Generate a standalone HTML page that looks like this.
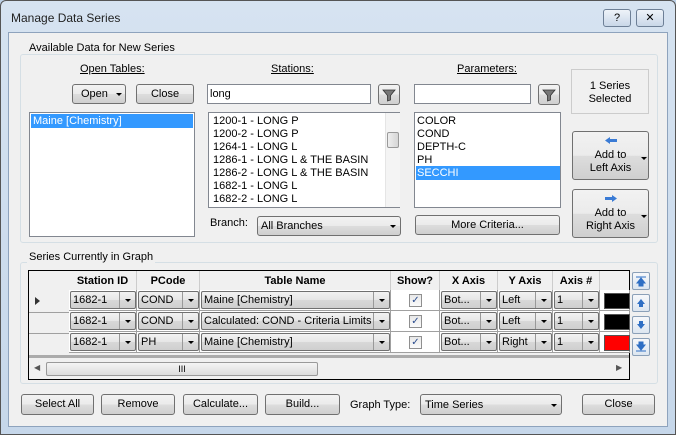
<!DOCTYPE html>
<html><head><meta charset="utf-8"><style>
*{box-sizing:border-box;margin:0;padding:0}
body{width:676px;height:435px;overflow:hidden;background:#bcd0e6;font-family:"Liberation Sans",sans-serif;font-size:11px;color:#000;position:relative}
.a{position:absolute}
.frame{left:0;top:0;width:676px;height:435px;border:1px solid #555;border-radius:6px 6px 0 0;background:linear-gradient(#d6e3f1,#c6d7ea)}
.client{left:8px;top:32px;width:660px;height:395px;background:#f0f0f0;border:1px solid #8ea3bd}
.grp{border:1px solid #d5dfe5;border-radius:3px}
.gl{background:#f0f0f0;padding:0 2px;font-size:11px}
.btn{border:1px solid #707070;border-radius:3px;background:linear-gradient(#f2f2f2 0%,#ebebeb 50%,#dddddd 51%,#cfcfcf 100%);text-align:center;font-size:11px;line-height:18px}
.box{background:#fff;border:1px solid #828790}
.sel{background:#3399ff;color:#fff}
.u{text-decoration:underline}
.it{position:absolute;left:4px;font-size:11px;white-space:nowrap}
.arr{position:absolute;width:0;height:0;border-left:3px solid transparent;border-right:3px solid transparent;border-top:3px solid #000}
.cell{position:absolute;height:21px;border-right:1px solid #a0a0a0;border-bottom:1px solid #a0a0a0}
.cb{position:absolute;top:2px;height:18px;border:1px solid #707070;border-radius:2px;background:linear-gradient(#f2f2f2,#e6e6e6 50%,#d8d8d8 51%,#cfcfcf);font-size:11px;line-height:16px;padding-left:2px;white-space:nowrap;overflow:hidden}
.hd{position:absolute;top:0;height:20px;font-weight:bold;text-align:center;line-height:20px;border-right:1px solid #ccc;font-size:11px}
.sb{position:absolute;width:18px;height:18px;border:1px solid #8ba0b8;border-radius:2px;background:linear-gradient(#f6f8fb,#dde6f0)}
</style></head><body>
<div class="a frame"></div>
<div class="a" style="left:11px;top:11px;font-size:12px;color:#222">Manage Data Series</div>
<div class="a btn" style="left:603px;top:9px;width:28px;height:18px;border-color:#6d7f96;line-height:16px;background:linear-gradient(#eef3f9,#c9d7e8)">?</div>
<div class="a btn" style="left:636px;top:9px;width:28px;height:18px;border-color:#6d7f96;line-height:16px;background:linear-gradient(#eef3f9,#c9d7e8)">✕</div>
<div class="a client"></div>

<div class="a grp" style="left:20px;top:54px;width:638px;height:189px"></div>
<div class="a gl" style="left:27px;top:42px">Available Data for New Series</div>
<div class="a u" style="left:80px;top:63px">Open Tables:</div>
<div class="a u" style="left:271px;top:63px">Stations:</div>
<div class="a u" style="left:457px;top:63px">Parameters:</div>
<div class="a btn" style="left:72px;top:84px;width:54px;height:20px;text-align:left;padding-left:8px">Open<span class="arr" style="left:43px;top:8px"></span></div>
<div class="a btn" style="left:136px;top:84px;width:58px;height:20px">Close</div>
<div class="a box" style="left:29px;top:112px;width:166px;height:125px"><div class="a sel" style="left:1px;top:1px;width:162px;height:14px;padding-left:2px;line-height:14px">Maine [Chemistry]</div></div>

<div class="a box" style="left:207px;top:84px;width:164px;height:20px;padding:3px 2px">long</div>
<div class="a btn" style="left:378px;top:84px;width:22px;height:21px">
<svg width="14" height="14" viewBox="0 0 14 14" style="margin-top:3px"><path d="M1 2h12L8.5 7.5V12l-3 1V7.5z" fill="#777" stroke="#333" stroke-width="0.8"/></svg></div>
<div class="a box" style="left:208px;top:112px;width:192px;height:96px">
<div class="it" style="top:2px">1200-1 - LONG P</div>
<div class="it" style="top:15px">1200-2 - LONG P</div>
<div class="it" style="top:28px">1264-1 - LONG L</div>
<div class="it" style="top:41px">1286-1 - LONG L &amp; THE BASIN</div>
<div class="it" style="top:54px">1286-2 - LONG L &amp; THE BASIN</div>
<div class="it" style="top:67px">1682-1 - LONG L</div>
<div class="it" style="top:80px">1682-2 - LONG L</div>
<div class="a" style="left:176px;top:0;width:15px;height:94px;background:#f4f4f4;border-left:1px solid #e5e5e5"></div>
<div class="a" style="left:178px;top:19px;width:12px;height:16px;border:1px solid #999;border-radius:2px;background:linear-gradient(90deg,#eee,#d6d6d6)"></div>
</div>
<div class="a" style="left:210px;top:217px">Branch:</div>
<div class="a btn" style="left:257px;top:216px;width:144px;height:20px;text-align:left;padding-left:3px">All Branches<span class="arr" style="left:132px;top:8px"></span></div>

<div class="a box" style="left:414px;top:84px;width:117px;height:20px"></div>
<div class="a btn" style="left:538px;top:84px;width:22px;height:21px">
<svg width="14" height="14" viewBox="0 0 14 14" style="margin-top:3px"><path d="M1 2h12L8.5 7.5V12l-3 1V7.5z" fill="#777" stroke="#333" stroke-width="0.8"/></svg></div>
<div class="a box" style="left:414px;top:112px;width:147px;height:96px">
<div class="it" style="top:2px;left:2px">COLOR</div>
<div class="it" style="top:15px;left:2px">COND</div>
<div class="it" style="top:28px;left:2px">DEPTH-C</div>
<div class="it" style="top:41px;left:2px">PH</div>
<div class="a sel" style="left:1px;top:53px;width:144px;height:14px;padding-left:1px;line-height:14px">SECCHI</div>
</div>
<div class="a btn" style="left:415px;top:215px;width:145px;height:20px">More Criteria...</div>

<div class="a" style="left:571px;top:69px;width:78px;height:45px;border:1px solid #ccc;text-align:center;padding-top:10px;line-height:13px">1 Series<br>Selected</div>
<div class="a btn" style="left:572px;top:131px;width:77px;height:49px;line-height:13px;padding-top:4px">
<svg width="14" height="9" viewBox="0 0 14 9"><path d="M1 4.5L6 1v2h7v3H6v2z" fill="#3a7bd5"/></svg><br>Add to<br>Left Axis<span class="arr" style="left:68px;top:25px"></span></div>
<div class="a btn" style="left:572px;top:189px;width:77px;height:49px;line-height:13px;padding-top:4px">
<svg width="14" height="9" viewBox="0 0 14 9"><path d="M13 4.5L8 1v2H1v3h7v2z" fill="#3a7bd5"/></svg><br>Add to<br>Right Axis<span class="arr" style="left:68px;top:25px"></span></div>

<div class="a grp" style="left:20px;top:262px;width:638px;height:122px"></div>
<div class="a gl" style="left:27px;top:251px">Series Currently in Graph</div>
<div class="a" style="left:28px;top:270px;width:602px;height:110px;border:1px solid #000;background:#ababab;overflow:hidden">
<div class="a" style="left:0;top:0;width:602px;height:20px;background:#f0f0f0"></div>
<div class="hd" style="left:40px;width:68px">Station ID</div>
<div class="hd" style="left:108px;width:63px">PCode</div>
<div class="hd" style="left:171px;width:191px">Table Name</div>
<div class="hd" style="left:362px;width:49px">Show?</div>
<div class="hd" style="left:411px;width:58px">X Axis</div>
<div class="hd" style="left:469px;width:55px">Y Axis</div>
<div class="hd" style="left:524px;width:47px">Axis #</div>
<div class="a" style="left:0;top:20px;width:602px;height:64px;background:#f0f0f0"></div>
<div class="a" style="left:6px;top:26px;border-top:4px solid transparent;border-bottom:4px solid transparent;border-left:5px solid #333"></div>
<div class="a" style="left:0;top:41px;width:40px;border-top:1px solid #a0a0a0"></div>
<div class="a" style="left:0;top:62px;width:40px;border-top:1px solid #a0a0a0"></div>
</div>
<div id="rows"></div>
<div class="a" style="left:29px;top:358px;width:600px;height:21px;background:#f0f0f0"></div>
<div class="a" style="left:46px;top:362px;width:272px;height:14px;border:1px solid #999;border-radius:2px;background:linear-gradient(#f4f4f4,#dcdcdc);text-align:center;font-size:9px;line-height:12px">III</div>
<div class="a" style="left:34px;top:363px;font-size:8px;color:#555">◀</div>
<div class="a" style="left:616px;top:363px;font-size:8px;color:#555">▶</div>

<div class="a sb" style="left:632px;top:272px"><svg width="16" height="16"><path d="M3 4h10M8 5l-4 5h8z M6 10h4v3H6z" fill="#2f6fc4" stroke="#2f6fc4" stroke-width="1"/></svg></div>
<div class="a sb" style="left:632px;top:294px"><svg width="16" height="16"><path d="M8 4l-4 5h8z M6 9h4v3H6z" fill="#2f6fc4"/></svg></div>
<div class="a sb" style="left:632px;top:316px"><svg width="16" height="16"><path d="M8 12l-4-5h8z M6 7h4V4H6z" fill="#2f6fc4"/></svg></div>
<div class="a sb" style="left:632px;top:338px"><svg width="16" height="16"><path d="M3 12h10M8 11l-4-5h8z M6 6h4V3H6z" fill="#2f6fc4" stroke="#2f6fc4" stroke-width="1"/></svg></div>

<div class="a btn" style="left:21px;top:394px;width:73px;height:21px">Select All</div>
<div class="a btn" style="left:101px;top:394px;width:74px;height:21px">Remove</div>
<div class="a btn" style="left:183px;top:394px;width:75px;height:21px">Calculate...</div>
<div class="a btn" style="left:265px;top:394px;width:75px;height:21px">Build...</div>
<div class="a" style="left:350px;top:399px">Graph Type:</div>
<div class="a btn" style="left:420px;top:394px;width:142px;height:21px;text-align:left;padding-left:4px;line-height:20px">Time Series<span class="arr" style="left:130px;top:9px"></span></div>
<div class="a btn" style="left:582px;top:394px;width:73px;height:21px">Close</div>

<script>
var rows=[["1682-1","COND","Maine [Chemistry]","Right0"],["1682-1","COND","Calculated: COND - Criteria Limits","Left"],["1682-1","PH","Maine [Chemistry]","Right"]];
rows[0][3]="Left";
var cols=[[69,68],[137,63],[200,191],[391,49],[440,58],[498,55],[553,47],[600,30]];
var h="";
rows.forEach(function(r,i){var y=290+i*21;
var vals=[r[0],r[1],r[2],"chk","Bot...",r[3],"1","col"];
cols.forEach(function(c,j){
h+='<div class="cell" style="left:'+c[0]+'px;top:'+y+'px;width:'+c[1]+'px;background:#fff"></div>';
var v=vals[j];
if(v=="chk"){h+='<div class="a" style="left:'+(c[0]+18)+'px;top:'+(y+4)+'px;width:13px;height:13px;border:1px solid #8f8f8f;background:linear-gradient(#e8e8e8,#fafafa);color:#2a4b8d;font-size:10px;line-height:11px;text-align:center">✓</div>';}
else if(v=="col"){h+='<div class="a" style="left:'+(c[0]+4)+'px;top:'+(y+3)+'px;width:26px;height:16px;border:1px solid #555;background:'+(i==2?'#ff0000':'#000')+'"></div>';}
else{h+='<div class="cb" style="left:'+(c[0]+1)+'px;top:'+(y+1)+'px;width:'+(c[1]-2)+'px">'+v+'<div class="a" style="right:0;top:0;width:16px;height:16px;border-left:1px solid #999"><span class="arr" style="left:5px;top:7px"></span></div></div>';}
});});
document.getElementById("rows").innerHTML=h;
</script>
</body></html>
